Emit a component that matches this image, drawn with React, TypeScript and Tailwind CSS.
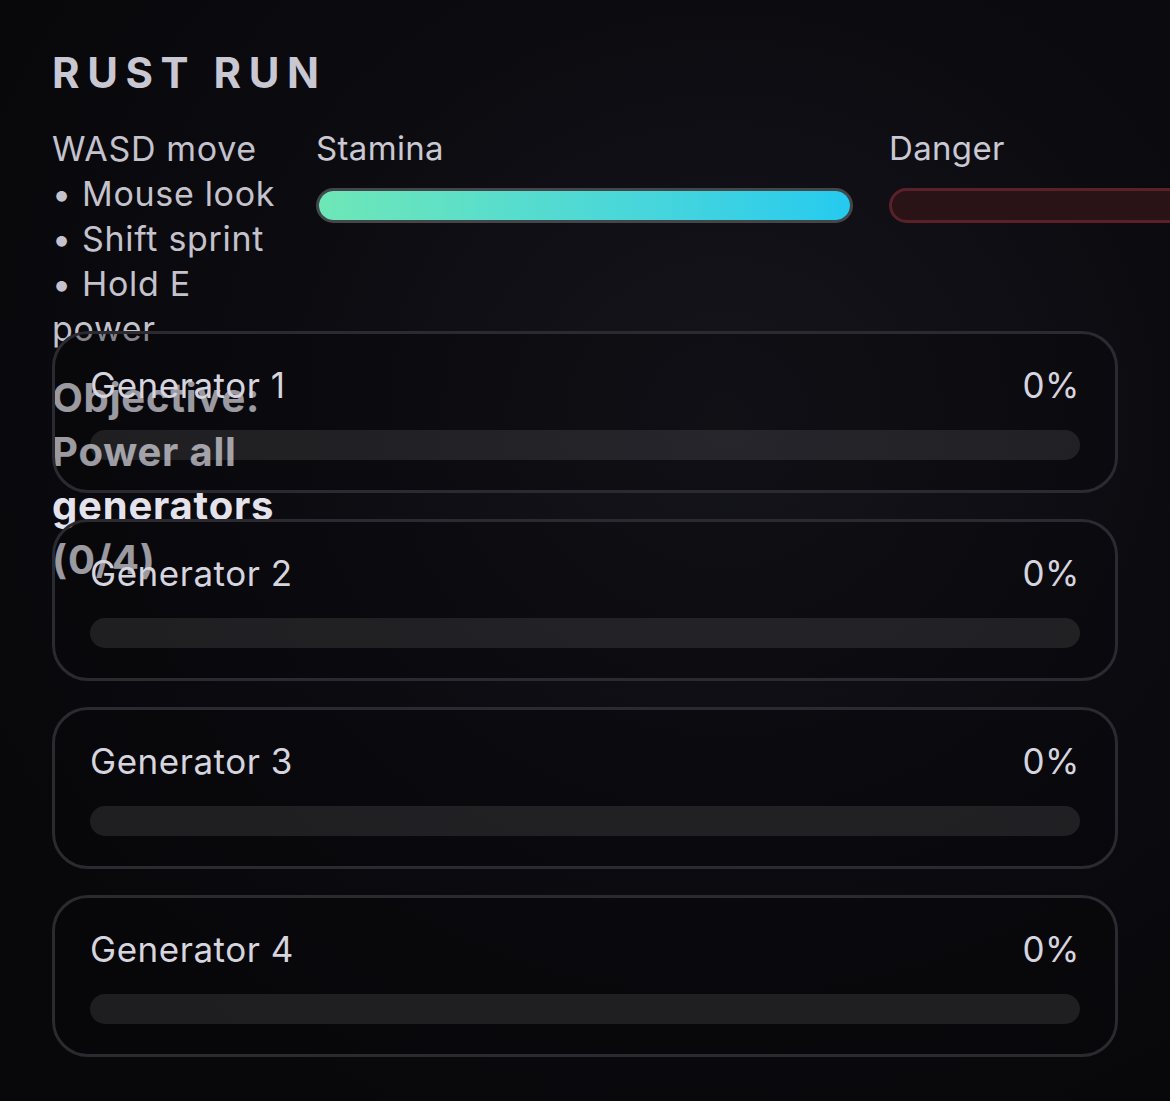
import React from "react";

const gens = [1, 2, 3, 4];

export default function App() {
  return (
    <div
      className="relative h-[1101px] w-[1170px] overflow-hidden bg-[#0a090c] bg-[radial-gradient(ellipse_at_62%_38%,#15151c_0%,#0c0b10_45%,#08070a_80%)]"
      style={{ fontFamily: "Inter, 'Noto Sans', sans-serif" }}
    >
      <div className="px-[52px] pt-[43px]">
        <h1 className="text-[42px] font-bold leading-[60px] tracking-[0.18em] text-[#c8c7d2]">
          RUST RUN
        </h1>

        <div className="mt-[23px] flex h-[181px] items-start gap-[36px]">
          <div className="w-[228px] shrink-0">
            <p className="text-[34px] leading-[45px] tracking-[0.02em] text-[#c3c2cd]">
              WASD move •&nbsp;Mouse look •&nbsp;Shift sprint •&nbsp;Hold E power
            </p>
            <p className="mt-[20px] text-[40px] font-bold leading-[54px] tracking-[0.02em] text-[#e4e3ec]">
              Objective: Power all generators (0/4)
            </p>
          </div>

          <div className="w-[537px] shrink-0">
            <div className="text-[33px] leading-[45px] tracking-[0.01em] text-[#c9c8d3]">Stamina</div>
            <div className="mt-[17px] h-[35px] w-full rounded-full border-[3px] border-[#44474a] bg-[#111214]">
              <div className="h-full w-full rounded-full bg-gradient-to-r from-[#6ee7b7] to-[#25caef]" />
            </div>
          </div>

          <div className="w-[537px] shrink-0">
            <div className="text-[33px] leading-[45px] tracking-[0.01em] text-[#c9c8d3]">Danger</div>
            <div className="mt-[17px] h-[35px] w-full rounded-full border-[3px] border-[#5a2228] bg-[#2a1317]">
              <div className="h-full w-0 rounded-full bg-[#ef4444]" />
            </div>
          </div>
        </div>

        <div className="mt-[24px] flex flex-col gap-[26px]">
          {gens.map((g) => (
            <div
              key={g}
              className="relative rounded-[36px] border-[3px] border-[#2b2a30] bg-[rgba(7,6,10,0.33)] px-[35px] py-[30px]"
            >
              <div className="flex items-center justify-between text-[35px] leading-[42px] tracking-[0.015em] text-[#d6d5df]">
                <span>Generator {g}</span>
                <span>0%</span>
              </div>
              <div className="mt-[24px] h-[30px] w-full rounded-full bg-[rgba(255,255,255,0.095)]">
                <div className="h-full w-0 rounded-full bg-[#facc15]" />
              </div>
            </div>
          ))}
        </div>
      </div>
    </div>
  );
}
